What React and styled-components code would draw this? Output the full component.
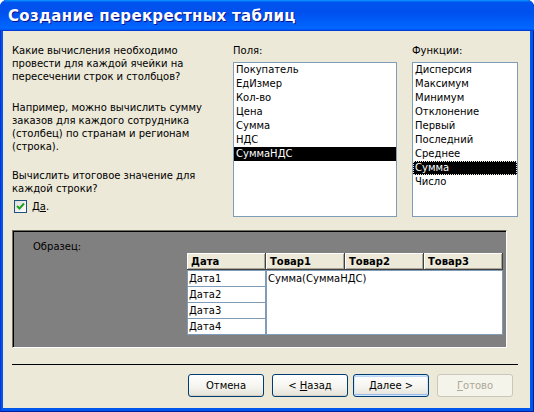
import React from 'react';
import styled, {createGlobalStyle} from 'styled-components';

const Global = createGlobalStyle`
  html, body {
    margin: 0;
    padding: 0;
    background: #fff;
  }
  body {
    font-family: 'DejaVu Sans', 'Liberation Sans', sans-serif;
    font-size: 10px;
    color: #000;
  }
`

const Window = styled.div`
  width: 534px;
  height: 412px;
  box-sizing: border-box;
  display: flex;
  flex-direction: column;
  background: #0055ea;
  border-radius: 7px 7px 0 0;
  padding: 0 4px 4px 3px;
  box-shadow: inset 1px 0 #0831d9, inset -1px 0 #001ea0, inset 0 -1px #001ea0;
  overflow: hidden;
`

const TitleBar = styled.div`
  height: 31px;
  margin: 0 -4px 0 -3px;
  padding-left: 8px;
  display: flex;
  align-items: center;
  background: linear-gradient(180deg, #0997ff, #0053ee 8%, #0050ee 40%, #06f 88%, #06f 93%, #005bff 95%, #003dd7 96%, #003dd7);
  border-radius: 7px 7px 0 0;

  h1 {
    margin: 0;
    font-family: 'DejaVu Sans', sans-serif;
    font-weight: bold;
    font-size: 15px;
    letter-spacing: 0.3px;
    color: #fff;
    text-shadow: 1px 1px #0f1089;
  }
`

const Body = styled.div`
  flex: 1;
  display: flex;
  flex-direction: column;
  background: #ece9d8;
  padding: 13px 12px 11px 9px;
  line-height: 13px;
`

const Top = styled.div`
  display: grid;
  grid-template-columns: 206px 164px 106px;
  column-gap: 15px;
`

const Intro = styled.div`
  display: flex;
  flex-direction: column;
`

const Paragraph = styled.p`
  margin: 0 0 ${p => p.$gap || 0}px;
`

const CheckRow = styled.label`
  display: flex;
  align-items: center;
  gap: 5px;
  margin: 5px 0 0 2px;
`

const Box = styled.span`
  width: 13px;
  height: 13px;
  box-sizing: border-box;
  border: 1px solid #1c5180;
  background: linear-gradient(135deg, #dcdcd7, #fff);
  display: flex;
  align-items: center;
  justify-content: center;
`

const Field = styled.div`
  display: flex;
  flex-direction: column;
  gap: 5px;
`

const ListBox = styled.ul`
  list-style: none;
  margin: 0;
  padding: 0;
  height: 155px;
  box-sizing: border-box;
  border: 1px solid #7f9db9;
  background: #fff;
`

const Item = styled.li`
  height: 14px;
  line-height: 14px;
  padding-left: 2px;
  white-space: nowrap;
  background: ${p => p.$selected ? '#000' : 'transparent'};
  color: ${p => p.$selected ? '#fff' : '#000'};
  outline: ${p => p.$focus ? '1px dotted #ece9d8' : 'none'};
  outline-offset: -1px;
`

const Sample = styled.div`
  margin-top: 13px;
  width: 495px;
  height: 118px;
  box-sizing: border-box;
  background: #808080;
  border: 1px solid;
  border-color: #716f64 #fff #fff #716f64;
  box-shadow: inset 1px 1px #000;
  padding: 9px 0 0 20px;
  display: flex;
  flex-direction: column;
`

const SampleLabel = styled.div`
  height: 13px;
`

const Table = styled.div`
  margin: 0 0 0 154px;
  display: flex;
  flex-direction: column;
`

const HeadRow = styled.div`
  display: grid;
  grid-template-columns: repeat(4, 79px);
`

const HeadCell = styled.div`
  height: 17px;
  box-sizing: border-box;
  background: #ece9d8;
  border-right: 1px solid #404040;
  border-bottom: 1px solid #404040;
  box-shadow: inset 1px 1px #fff, inset -1px -1px #aca899;
  font-weight: bold;
  padding: 2px 0 0 4px;
  line-height: 14px;
`

const BodyGrid = styled.div`
  display: grid;
  grid-template-columns: 79px 237px;
  align-items: start;
`

const DateColumn = styled.div`
  display: flex;
  flex-direction: column;
  margin-top: 1px;
`

const DateCell = styled.div`
  height: 17px;
  box-sizing: border-box;
  background: #fff;
  border: 1px solid #7f9db9;
  margin-top: -1px;
  padding-left: 1px;
  line-height: 15px;
`

const Values = styled.div`
  height: 65px;
  box-sizing: border-box;
  background: #fff;
  border: 1px solid #7f9db9;
  padding: 1px 0 0 1px;
`

const Separator = styled.hr`
  margin: 16px 0 0 0;
  width: 506px;
  border: 0;
  border-top: 1px solid #000;
  height: 0;
`

const Buttons = styled.div`
  margin-top: 9px;
  display: flex;
  justify-content: flex-end;
  gap: 8px;
  padding-right: 5px;
`

const Nav = styled.div`
  display: flex;
  gap: 5px;
`

const Button = styled.button`
  width: 76px;
  height: 23px;
  border-radius: 3px;
  font-family: 'DejaVu Sans', sans-serif;
  font-size: 10px;
  padding: 0;
  border: 1px solid ${p => p.disabled ? '#c9c7ba' : '#003c74'};
  color: ${p => p.disabled ? '#aca899' : '#000'};
  background: ${p => p.disabled ? '#f5f4ea' : 'linear-gradient(180deg, #fff 0%, #f4f3ee 60%, #e3e1d6 100%)'};
  box-shadow: ${p => p.$default
    ? 'inset 0 0 0 1px #cee7ff, inset 0 -1px 0 1px #98b8ea, inset 0 1px 0 1px #bcd4f6'
    : p.disabled ? 'none' : 'inset 0 -1px 0 #d6d0c5'};
`

const fields = ['Покупатель', 'ЕдИзмер', 'Кол-во', 'Цена', 'Сумма', 'НДС', 'СуммаНДС']
const funcs = ['Дисперсия', 'Максимум', 'Минимум', 'Отклонение', 'Первый', 'Последний', 'Среднее', 'Сумма', 'Число']

export default function App() {
	return (<>
		<Global/>
		<Window>
			<TitleBar>
				<h1>Создание перекрестных таблиц</h1>
			</TitleBar>
			<Body>
				<Top>
					<Intro>
						<Paragraph $gap={18}>
							Какие вычисления необходимо<br/>
							провести для каждой ячейки на<br/>
							пересечении строк и столбцов?
						</Paragraph>
						<Paragraph $gap={16}>
							Например, можно вычислить сумму<br/>
							заказов для каждого сотрудника<br/>
							(столбец) по странам и регионам<br/>
							(строка).
						</Paragraph>
						<Paragraph>
							Вычислить итоговое значение для<br/>
							каждой строки?
						</Paragraph>
						<CheckRow>
							<Box>
								<svg width="9" height="9" viewBox="0 0 9 9">
									<path d="M1 4 L3.5 6.5 L8 1.5" stroke="#21a121" strokeWidth="2" fill="none"/>
								</svg>
							</Box>
							<span>Д<u>а</u>.</span>
						</CheckRow>
					</Intro>
					<Field>
						<div>Поля:</div>
						<ListBox>
							{fields.map((f, i) => (
								<Item key={f} $selected={i === 6}>{f}</Item>
							))}
						</ListBox>
					</Field>
					<Field>
						<div>Функции:</div>
						<ListBox>
							{funcs.map((f, i) => (
								<Item key={f} $selected={i === 7} $focus={i === 7}>{f}</Item>
							))}
						</ListBox>
					</Field>
				</Top>
				<Sample>
					<SampleLabel>Образец:</SampleLabel>
					<Table>
						<HeadRow>
							<HeadCell>Дата</HeadCell>
							<HeadCell>Товар1</HeadCell>
							<HeadCell>Товар2</HeadCell>
							<HeadCell>Товар3</HeadCell>
						</HeadRow>
						<BodyGrid>
							<DateColumn>
								{['Дата1', 'Дата2', 'Дата3', 'Дата4'].map(d => <DateCell key={d}>{d}</DateCell>)}
							</DateColumn>
							<Values>Сумма(СуммаНДС)</Values>
						</BodyGrid>
					</Table>
				</Sample>
				<Separator/>
				<Buttons>
					<Button>Отмена</Button>
					<Nav>
						<Button>&lt; <u>Н</u>азад</Button>
						<Button $default><u>Д</u>алее &gt;</Button>
					</Nav>
					<Button disabled><u>Г</u>отово</Button>
				</Buttons>
			</Body>
		</Window>
	</>);
}
